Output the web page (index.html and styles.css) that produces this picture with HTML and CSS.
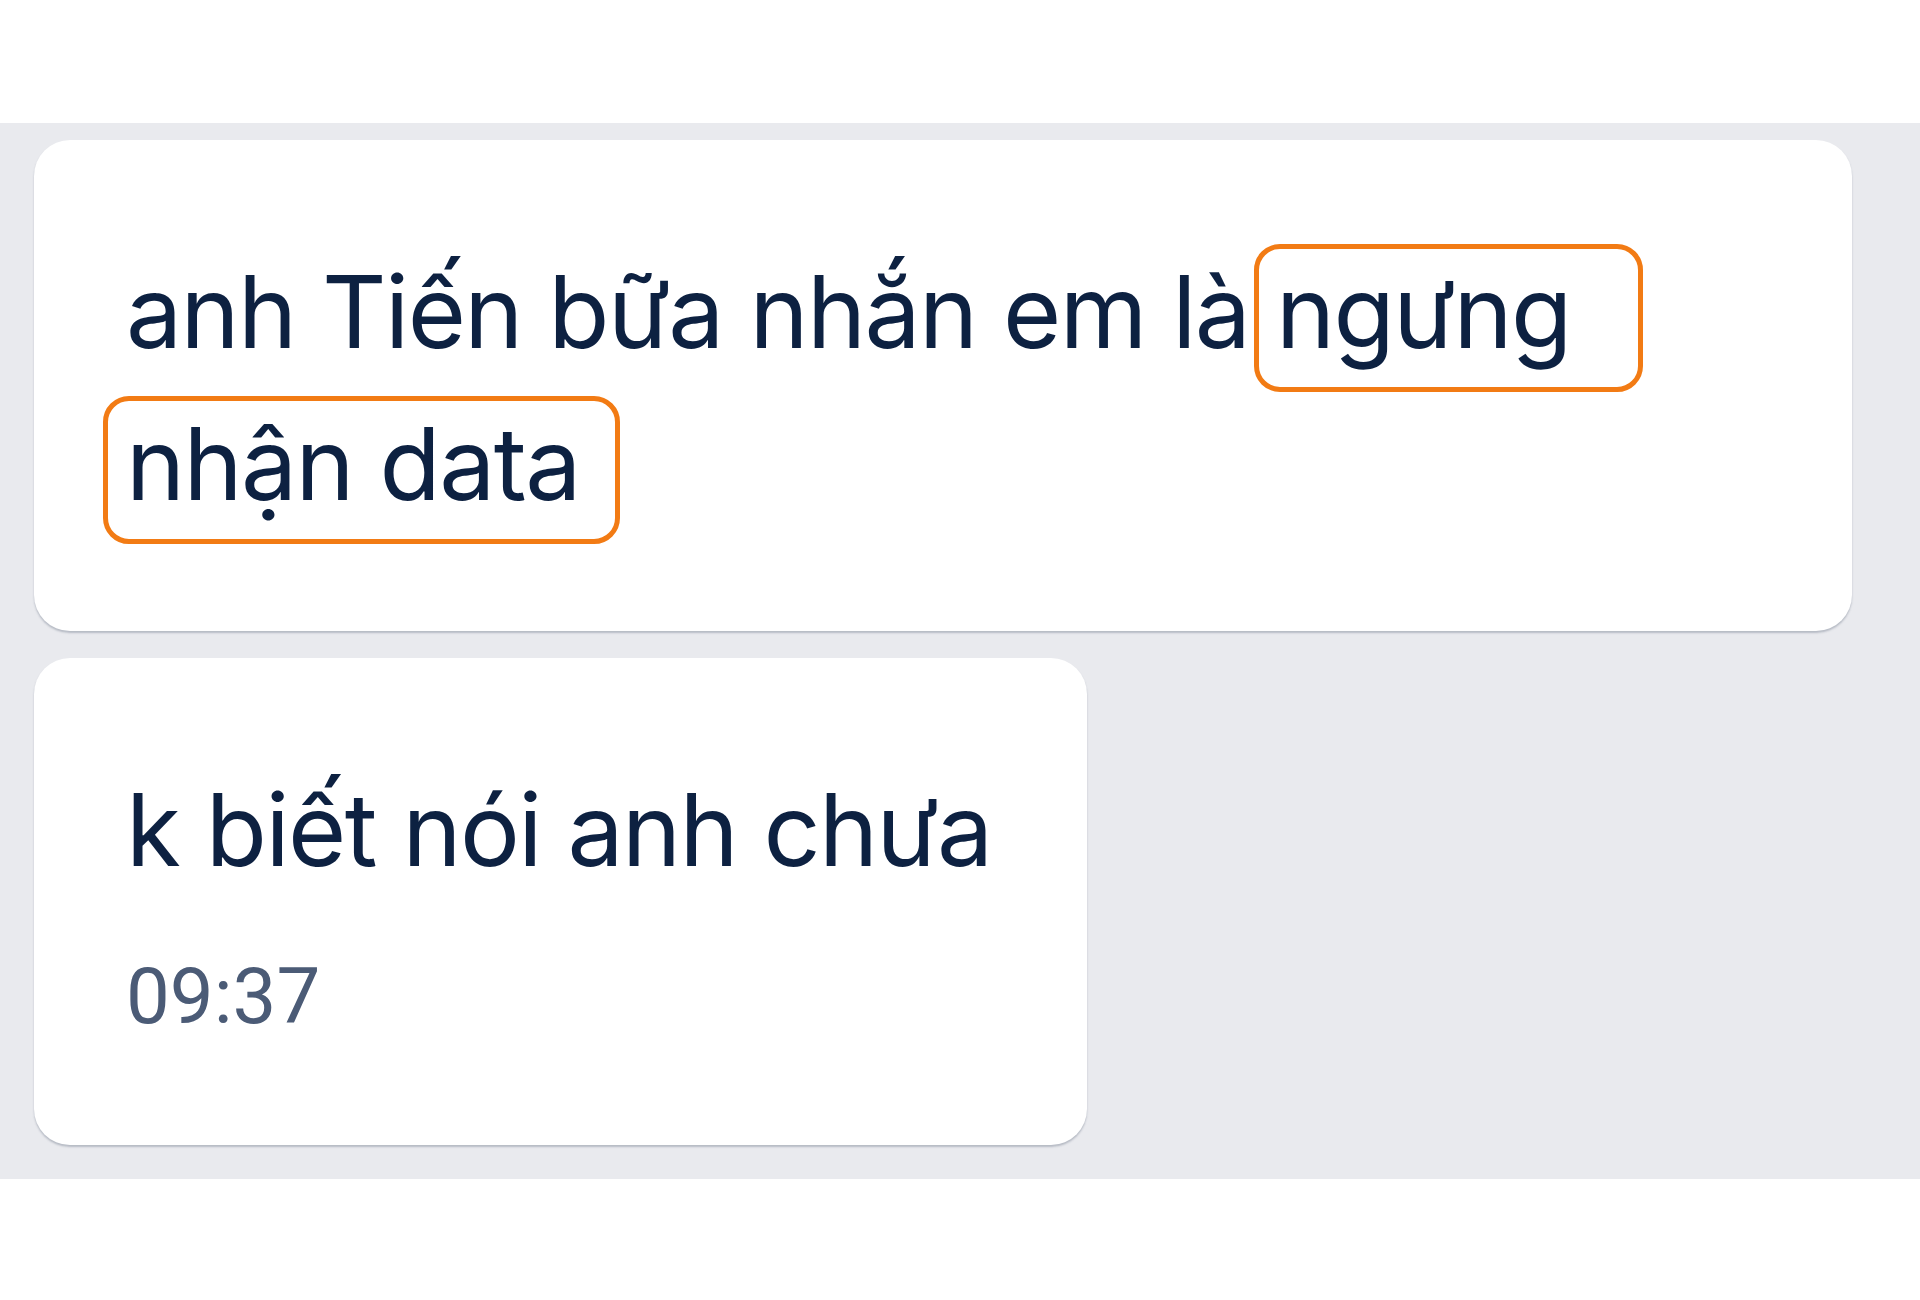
FILE: index.html
```html
<!DOCTYPE html>
<html lang="vi">
    <head>
        <meta charset="UTF-8">
        <meta name="viewport" content="width=device-width, initial-scale=1.0">
        <title>Tin nhắn</title>
        <link rel="stylesheet" href="styles.css">
    </head>
    <body>
        <section class="chat">
            <div class="bubble bubble-wide">
                <p class="msg">anh Tiến bữa nhắn em là <span class="mark mark-first">ngưng</span> <span class="mark mark-second">nhận data</span></p>
            </div>
            <div class="bubble bubble-last">
                <p class="msg">k biết nói anh chưa</p>
                <span class="time">09:37</span>
            </div>
        </section>
    </body>
</html>
```

FILE: styles.css
```css
body {
    margin: 0;
    width: 1920px;
    height: 1300px;
    background-color: #ffffff;
    font-family: Inter, 'Noto Sans', sans-serif;
    color: #0d2141;
}

.chat {
    margin-top: 123px;
    background-color: #e9eaee;
    padding: 17px 34px 34px 34px;
    display: flex;
    flex-direction: column;
    align-items: flex-start;
    gap: 27px;
}

.bubble {
    background-color: #ffffff;
    border-radius: 36px;
    padding: 96px 92px 91px 92px;
    box-shadow: 0 2px 2px rgba(90, 100, 120, 0.35);
    box-sizing: border-box;
}

.bubble-wide {
    width: 1818px;
}

.bubble-last {
    padding-right: 96px;
    padding-bottom: 101px;
}

.msg {
    margin: 0;
    font-size: 100px;
    line-height: 152px;
    letter-spacing: -1.6px;
}

.mark {
    position: relative;
}

.mark::after {
    content: '';
    position: absolute;
    top: -7px;
    bottom: -20px;
    border: 5px solid #f27b14;
    border-radius: 26px;
}

.mark-first::after {
    left: -22px;
    right: -72px;
}

.mark-second::after {
    left: -23px;
    right: -40px;
}

.time {
    display: block;
    margin-top: 44px;
    font-family: Roboto, 'Liberation Sans', sans-serif;
    font-size: 78px;
    line-height: 94px;
    color: #4b5b76;
}
```
